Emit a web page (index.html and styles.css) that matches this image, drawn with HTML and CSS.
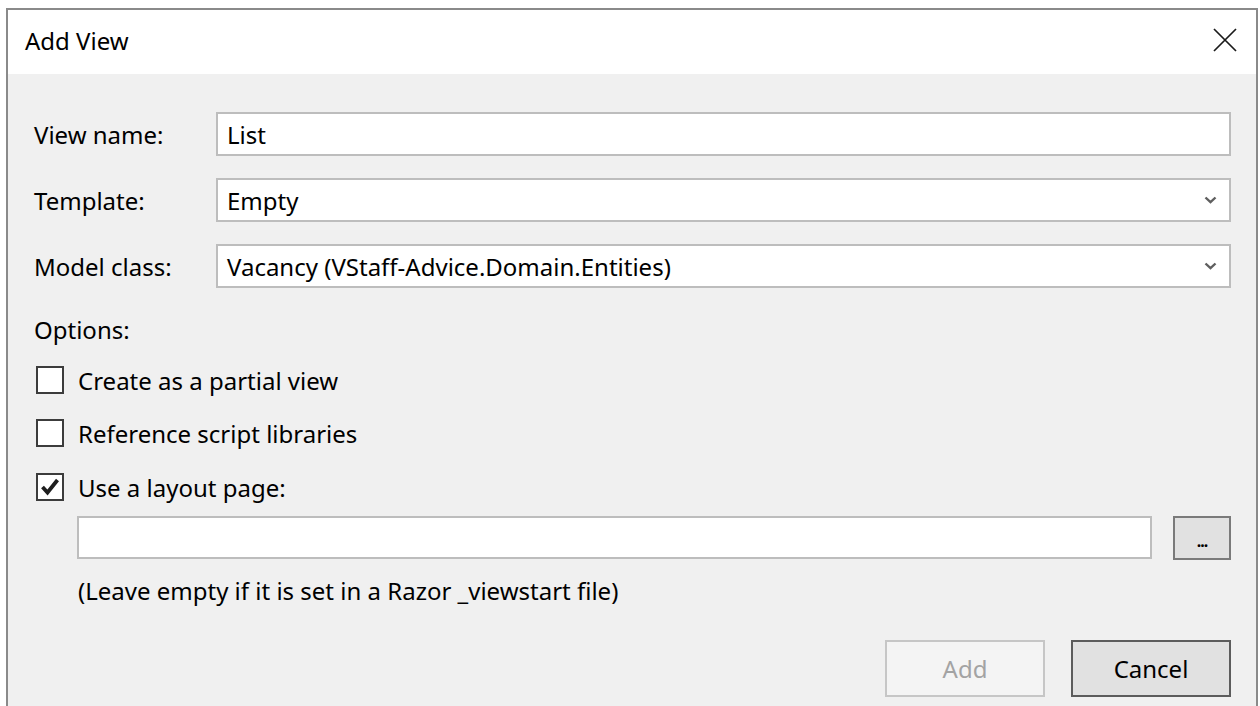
FILE: index.html
```html
<!DOCTYPE html>
<html lang="en">
<head>
<meta charset="utf-8">
<title>Add View</title>
<link rel="stylesheet" href="styles.css">
</head>
<body>
<div class="window">
  <header class="titlebar">
    <span class="title">Add View</span>
    <span class="close" aria-label="Close">
      <svg width="24" height="24" viewBox="0 0 24 24"><path d="M1 1 L23 23 M23 1 L1 23" stroke="#1a1a1a" stroke-width="1.7" fill="none"/></svg>
    </span>
  </header>
  <main class="content">
    <div class="field">
      <span class="field-label">View name:</span>
      <div class="textbox">List</div>
    </div>
    <div class="field">
      <span class="field-label">Template:</span>
      <div class="textbox combo">
        <span>Empty</span>
        <svg class="chevron" width="13" height="8" viewBox="0 0 13 8"><path d="M1.5 1.5 L6.5 6.2 L11.5 1.5" stroke="#5f5f5f" stroke-width="2.4" fill="none"/></svg>
      </div>
    </div>
    <div class="field">
      <span class="field-label">Model class:</span>
      <div class="textbox combo">
        <span>Vacancy (VStaff-Advice.Domain.Entities)</span>
        <svg class="chevron" width="13" height="8" viewBox="0 0 13 8"><path d="M1.5 1.5 L6.5 6.2 L11.5 1.5" stroke="#5f5f5f" stroke-width="2.4" fill="none"/></svg>
      </div>
    </div>

    <div class="options-label">Options:</div>
    <div class="check">
      <span class="box"></span>
      <span>Create as a partial view</span>
    </div>
    <div class="check">
      <span class="box"></span>
      <span>Reference script libraries</span>
    </div>
    <div class="check check-last">
      <span class="box">
        <svg width="24" height="24" viewBox="0 0 24 24"><path d="M4.5 12 L9.5 17.5 L19.5 5" stroke="#1e1e1e" stroke-width="3.8" fill="none"/></svg>
      </span>
      <span>Use a layout page:</span>
    </div>

    <div class="layout-row">
      <div class="textbox layout-path"></div>
      <span class="browse">...</span>
    </div>
    <div class="hint">(Leave empty if it is set in a Razor _viewstart file)</div>

    <div class="actions">
      <span class="btn btn-disabled">Add</span>
      <span class="btn btn-default">Cancel</span>
    </div>
  </main>
</div>
</body>
</html>
```

FILE: styles.css
```css
html, body {
  margin: 0;
  padding: 0;
  background: #ffffff;
}

body {
  font-family: "Noto Sans", "Open Sans", sans-serif;
  font-size: 24px;
  color: #000;
}

.window {
  margin: 8px 2px 0 6px;
  border: 2px solid #8a8a8a;
  border-bottom: none;
  height: 698px;
  box-sizing: border-box;
  display: flex;
  flex-direction: column;
  background: #f0f0f0;
}

.titlebar {
  height: 64px;
  flex: none;
  background: #ffffff;
  display: flex;
  align-items: center;
  justify-content: space-between;
  padding: 0 19px 0 17px;
}

.title {
  line-height: 1;
  margin-top: -2px;
}

.close {
  width: 24px;
  height: 24px;
  display: flex;
  margin-top: -4px;
}

.content {
  padding: 38px 25px 0 26px;
  display: flex;
  flex-direction: column;
}

.field {
  display: flex;
  align-items: center;
  height: 44px;
  margin-bottom: 22px;
}

.field-label {
  width: 182px;
  flex: none;
}

.textbox {
  flex: 1;
  height: 44px;
  box-sizing: border-box;
  border: 2px solid #bdbdbd;
  background: #ffffff;
  padding: 0 9px;
  display: flex;
  align-items: center;
}

.combo {
  justify-content: space-between;
  padding-right: 12px;
}

.options-label {
  margin-top: 3px;
  height: 34px;
  line-height: 34px;
}

.check {
  display: flex;
  align-items: center;
  height: 40px;
  margin-top: 13px;
  gap: 14px;
  padding-left: 2px;
}

.check-last {
  margin-top: 14px;
}

.box {
  width: 28px;
  height: 28px;
  box-sizing: border-box;
  border: 2px solid #3c3c3c;
  background: #ffffff;
  display: flex;
  align-items: center;
  justify-content: center;
  flex: none;
}

.layout-row {
  display: flex;
  gap: 21px;
  margin-top: 9px;
  padding-left: 43px;
}

.layout-path {
  height: 43px;
}

.browse {
  width: 58px;
  height: 44px;
  box-sizing: border-box;
  border: 2px solid #7a7a7a;
  background: #e1e1e1;
  display: flex;
  align-items: center;
  justify-content: center;
  padding-top: 6px;
  font-size: 16px;
  font-weight: bold;
  letter-spacing: -1px;
  flex: none;
}

.hint {
  margin-top: 14px;
  height: 34px;
  line-height: 34px;
  padding-left: 44px;
}

.actions {
  display: flex;
  justify-content: flex-end;
  gap: 26px;
  margin-top: 32px;
}

.btn {
  width: 160px;
  height: 57px;
  box-sizing: border-box;
  display: flex;
  align-items: center;
  justify-content: center;
}

.btn-disabled {
  border: 2px solid #c6c6c6;
  background: #f4f4f4;
  color: #a3a3a3;
}

.btn-default {
  border: 2px solid #5c5c5c;
  background: #e1e1e1;
}
```
